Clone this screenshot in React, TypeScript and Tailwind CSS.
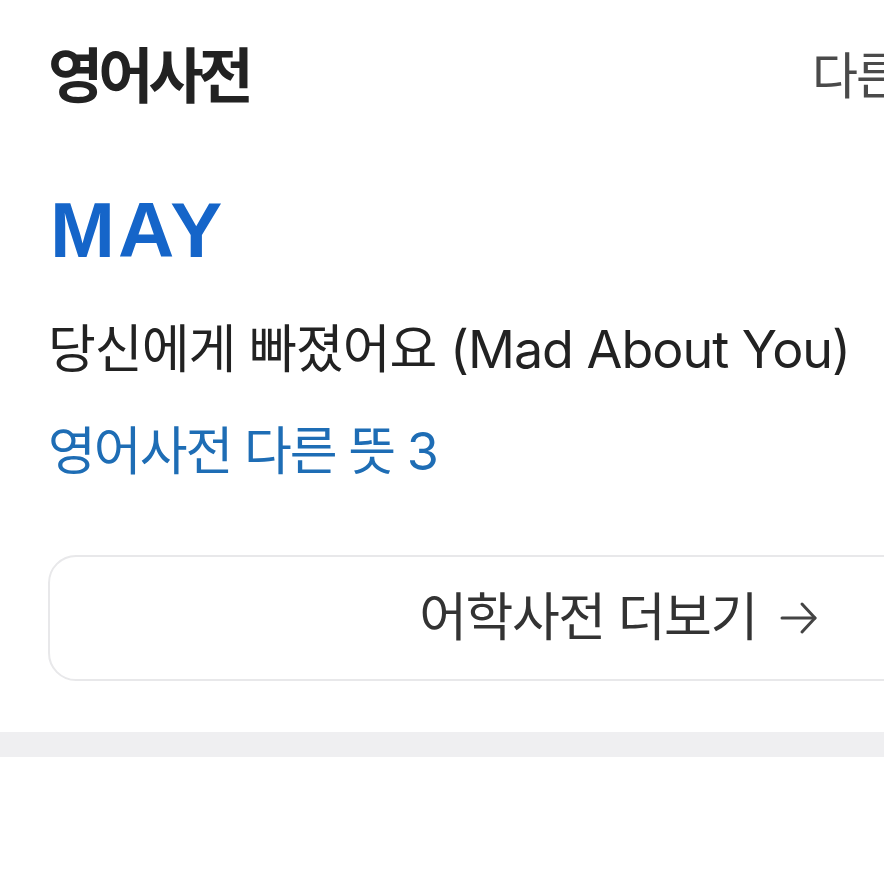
import React from "react";

const KR = { fontFamily: '"Inter", "Noto Sans CJK KR", sans-serif' };

export default function App() {
  return (
    <div className="w-[884px] h-[884px] overflow-hidden bg-white" style={KR}>
      <div className="w-[1238px]">
        <div className="px-[48px] pt-[42px]">
          <div className="flex items-center">
            <h1 className="text-[60px] leading-[68px] font-bold text-[#222] tracking-[-5px]">영어사전</h1>
            <span className="ml-auto w-[378px] text-[50px] leading-[68px] text-[#4a4a4a] tracking-[-2px]">다른 사전</span>
          </div>
          <div
            className="mt-[80px] ml-[2px] text-[78px] leading-[80px] font-bold text-[#1565c9] tracking-[3px]"
            style={{ fontFamily: '"Liberation Sans", Arial, sans-serif' }}
          >
            MAY
          </div>
          <p className="mt-[50px] text-[52px] leading-[60px] text-[#222] tracking-[-1px]">
            당신에게 빠졌어요 (Mad About You)
          </p>
          <p className="mt-[42px] text-[52px] leading-[60px] text-[#1e6db5] tracking-[-2px]">
            영어사전 다른 뜻 3
          </p>
          <button className="mt-[73px] w-full h-[126px] rounded-[28px] border-2 border-[#e8e8ea] bg-white flex items-center justify-center gap-[22px]">
            <span className="text-[52px] leading-[60px] text-[#333] tracking-[-1.5px]">어학사전 더보기</span>
            <svg width="40" height="40" viewBox="0 0 40 40" fill="none" stroke="#444" strokeWidth="3" strokeLinecap="round" strokeLinejoin="round">
              <path d="M3 20H36" />
              <path d="M23 6L36 20L23 34" />
            </svg>
          </button>
        </div>
        <div className="mt-[51px] h-[25px] bg-[#efeff1]" />
      </div>
    </div>
  );
}
